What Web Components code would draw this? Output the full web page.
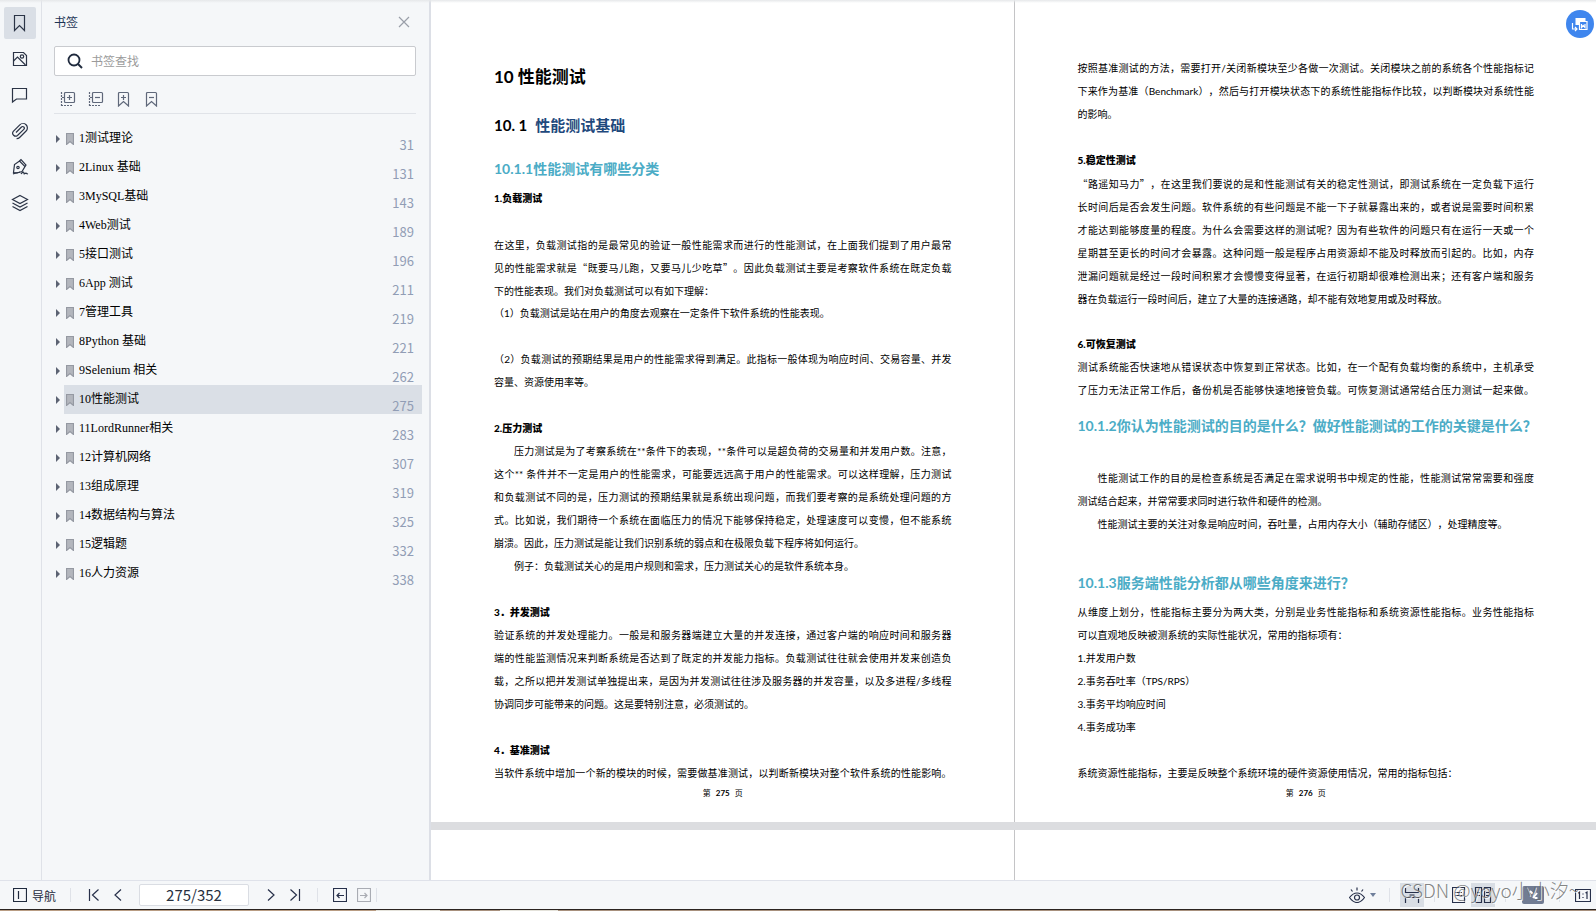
<!DOCTYPE html>
<html lang="zh-CN">
<head>
<meta charset="utf-8">
<title>性能测试</title>
<style>
  html, body {
    height: 100%;
    margin: 0;
  }

  body {
    font-family: "Noto Sans CJK SC", sans-serif;
    font-size: 12px;
    color: #1f2a3d;
    overflow: hidden;
  }
</style>
</head>
<body>
<pdf-reader>
  <side-rail slot="rail"></side-rail>
  <bookmark-panel slot="panel" heading="书签">
    <bookmark-item page="31">1测试理论</bookmark-item>
    <bookmark-item page="131">2Linux 基础</bookmark-item>
    <bookmark-item page="143">3MySQL基础</bookmark-item>
    <bookmark-item page="189">4Web测试</bookmark-item>
    <bookmark-item page="196">5接口测试</bookmark-item>
    <bookmark-item page="211">6App 测试</bookmark-item>
    <bookmark-item page="219">7管理工具</bookmark-item>
    <bookmark-item page="221">8Python 基础</bookmark-item>
    <bookmark-item page="262">9Selenium 相关</bookmark-item>
    <bookmark-item page="275" selected>10性能测试</bookmark-item>
    <bookmark-item page="283">11LordRunner相关</bookmark-item>
    <bookmark-item page="307">12计算机网络</bookmark-item>
    <bookmark-item page="319">13组成原理</bookmark-item>
    <bookmark-item page="325">14数据结构与算法</bookmark-item>
    <bookmark-item page="332">15逻辑题</bookmark-item>
    <bookmark-item page="338">16人力资源</bookmark-item>
  </bookmark-panel>

  <pdf-page number="275">
    <doc-heading level="1">10 性能测试</doc-heading>
    <doc-heading level="2" number="10. 1">性能测试基础</doc-heading>
    <doc-heading level="3">10.1.1性能测试有哪些分类</doc-heading>
    <doc-heading level="4">1.负载测试</doc-heading>
    <doc-blank></doc-blank>
    <doc-text quoted>
      在这里，负载测试指的是最常见的验证一般性能需求而进行的性能测试，在上面我们提到了用户最常
      见的性能需求就是“既要马儿跑，又要马儿少吃草”。因此负载测试主要是考察软件系统在既定负载
      下的性能表现。我们对负载测试可以有如下理解：
    </doc-text>
    <doc-text>（1）负载测试是站在用户的角度去观察在一定条件下软件系统的性能表现。</doc-text>
    <doc-blank></doc-blank>
    <doc-text>
      （2）负载测试的预期结果是用户的性能需求得到满足。此指标一般体现为响应时间、交易容量、并发
      容量、资源使用率等。
    </doc-text>
    <doc-blank></doc-blank>
    <doc-heading level="4">2.压力测试</doc-heading>
    <doc-text indent>
      压力测试是为了考察系统在**条件下的表现，**条件可以是超负荷的交易量和并发用户数。注意，
      这个** 条件并不一定是用户的性能需求，可能要远远高于用户的性能需求。可以这样理解，压力测试
      和负载测试不同的是，压力测试的预期结果就是系统出现问题，而我们要考察的是系统处理问题的方
      式。比如说，我们期待一个系统在面临压力的情况下能够保持稳定，处理速度可以变慢，但不能系统
      崩溃。因此，压力测试是能让我们识别系统的弱点和在极限负载下程序将如何运行。
    </doc-text>
    <doc-text indent>例子：负载测试关心的是用户规则和需求，压力测试关心的是软件系统本身。</doc-text>
    <doc-blank></doc-blank>
    <doc-heading level="4">3．并发测试</doc-heading>
    <doc-text>
      验证系统的并发处理能力。一般是和服务器端建立大量的并发连接，通过客户端的响应时间和服务器
      端的性能监测情况来判断系统是否达到了既定的并发能力指标。负载测试往往就会使用并发来创造负
      载，之所以把并发测试单独提出来，是因为并发测试往往涉及服务器的并发容量，以及多进程/多线程
      协调同步可能带来的问题。这是要特别注意，必须测试的。
    </doc-text>
    <doc-blank></doc-blank>
    <doc-heading level="4">4．基准测试</doc-heading>
    <doc-text full>当软件系统中增加一个新的模块的时候，需要做基准测试，以判断新模块对整个软件系统的性能影响。</doc-text>
  </pdf-page>

  <pdf-page number="276" side="right">
    <doc-text>
      按照基准测试的方法，需要打开/关闭新模块至少各做一次测试。关闭模块之前的系统各个性能指标记
      下来作为基准（Benchmark），然后与打开模块状态下的系统性能指标作比较，以判断模块对系统性能
      的影响。
    </doc-text>
    <doc-blank></doc-blank>
    <doc-heading level="4">5.稳定性测试</doc-heading>
    <doc-text quoted>
      “路遥知马力”，在这里我们要说的是和性能测试有关的稳定性测试，即测试系统在一定负载下运行
      长时间后是否会发生问题。软件系统的有些问题是不能一下子就暴露出来的，或者说是需要时间积累
      才能达到能够度量的程度。为什么会需要这样的测试呢？因为有些软件的问题只有在运行一天或一个
      星期甚至更长的时间才会暴露。这种问题一般是程序占用资源却不能及时释放而引起的。比如，内存
      泄漏问题就是经过一段时间积累才会慢慢变得显著，在运行初期却很难检测出来；还有客户端和服务
      器在负载运行一段时间后，建立了大量的连接通路，却不能有效地复用或及时释放。
    </doc-text>
    <doc-blank></doc-blank>
    <doc-heading level="4">6.可恢复测试</doc-heading>
    <doc-text full>
      测试系统能否快速地从错误状态中恢复到正常状态。比如，在一个配有负载均衡的系统中，主机承受
      了压力无法正常工作后，备份机是否能够快速地接管负载。可恢复测试通常结合压力测试一起来做。
    </doc-text>
    <doc-heading level="3">10.1.2你认为性能测试的目的是什么？做好性能测试的工作的关键是什么？</doc-heading>
    <doc-blank></doc-blank>
    <doc-text indent>
      性能测试工作的目的是检查系统是否满足在需求说明书中规定的性能，性能测试常常需要和强度
      测试结合起来，并常常要求同时进行软件和硬件的检测。
    </doc-text>
    <doc-text indent>性能测试主要的关注对象是响应时间，吞吐量，占用内存大小（辅助存储区），处理精度等。</doc-text>
    <doc-blank></doc-blank>
    <doc-heading level="3">10.1.3服务端性能分析都从哪些角度来进行？</doc-heading>
    <doc-text>
      从维度上划分，性能指标主要分为两大类，分别是业务性能指标和系统资源性能指标。业务性能指标
      可以直观地反映被测系统的实际性能状况，常用的指标项有：
    </doc-text>
    <doc-text>1.并发用户数</doc-text>
    <doc-text>2.事务吞吐率（TPS/RPS）</doc-text>
    <doc-text>3.事务平均响应时间</doc-text>
    <doc-text>4.事务成功率</doc-text>
    <doc-blank></doc-blank>
    <doc-text>系统资源性能指标，主要是反映整个系统环境的硬件资源使用情况，常用的指标包括：</doc-text>
  </pdf-page>

  <pdf-page></pdf-page>
  <pdf-page side="right"></pdf-page>

  <convert-button slot="float"></convert-button>
  <status-bar slot="status" position="275/352"></status-bar>
  <water-mark slot="mark">CSDN @yoyo小小汐~</water-mark>
</pdf-reader>

<script>
// [width, height, markup]
const ICONS = {
  bookmark: [18, 18, '<path d="M3.500 1.500h10v15l-5-5-5 5z"/>'],
  image: [18, 18, '<path d="M2.500 2.500h10l3 3v10h-13z"/><circle cx="11" cy="6.500" r="1.700"/><path d="M2.500 11l4-4 8 8"/>'],
  comment: [18, 18, '<path d="M1.500 2.500h14v10.500h-10l-4 3z"/>'],
  clip: [18, 18, '<path d="M5 10.500l5.500-5.500a1.600 1.600 0 0 1 2.300 2.300l-6.300 6.200a3 3 0 0 1-4.200-4.200l6.500-6.500a4.300 4.300 0 0 1 6.300 6.200l-6.500 6.500a4 4 0 0 1-3 1.200"/>'],
  pen: [18, 18, '<path d="M2.500 14.500l1-8 5-3.500 5.500 5.500-3 5-5 1.500z"/><path d="M8.500 3l1.500-1.500 5 5.500-1 1.500"/><circle cx="7" cy="9.500" r="1.200"/><path d="M2 16c2-1 4-1 7-2M10 16c2-3 3-2 3-.500s2-1.500 2.500 0l1.500.500"/>'],
  layers: [18, 18, '<path d="M9 1.500l7.500 4-7.500 4-7.500-4z"/><path d="M1.500 9l7.500 4 7.500-4M1.500 12.500l7.500 4 7.500-4"/>'],
  close: [12, 12, '<path d="M1 1l10 10M11 1l-10 10"/>'],
  search: [16, 16, '<circle cx="7" cy="7" r="5.500" stroke-width="1.800"/><path d="M11 11l4 4" stroke-width="2"/>'],
  expand: [16, 16, '<rect x="4.500" y="1.500" width="10" height="10" rx="1"/><path d="M7 6.500h5M9.500 4v5"/><path d="M1.500 1v14M1 14.500h11" stroke-dasharray="2 1"/><path d="M2 6.500h2"/>'],
  collapse: [16, 16, '<rect x="4.500" y="1.500" width="10" height="10" rx="1"/><path d="M7 6.500h5"/><path d="M1.500 1v14M1 14.500h11" stroke-dasharray="2 1"/><path d="M2 6.500h2"/>'],
  add: [16, 16, '<path d="M2.500 2.500q0-1 1-1h8q1 0 1 1v12.500l-5-4.500-5 4.500z"/><path d="M5 6.500h5M7.500 4v5"/>'],
  remove: [16, 16, '<path d="M2.500 2.500q0-1 1-1h8q1 0 1 1v12.500l-5-4.500-5 4.500z"/><path d="M5 6.500h5"/>'],
  arrow: [6, 10, '<path d="M1 1l4 4-4 4z" fill="currentColor" stroke="none"/>'],
  mark: [8, 12, '<path d="M.500.500h7v11l-3.500-3-3.500 3z" fill="#b3b6bd" stroke="#9599a2"/>'],
  nav: [14, 14, '<path d="M.500.500h13v13h-13zM5.500 3v8"/>'],
  first: [12, 14, '<path d="M1.500 1v12M10.500 1.500l-6 5.500 6 5.500"/>'],
  prev: [8, 14, '<path d="M7 1.500l-6 5.500 6 5.500"/>'],
  next: [8, 14, '<path d="M1 1.500l6 5.500-6 5.500"/>'],
  last: [12, 14, '<path d="M10.500 1v12M1.500 1.500l6 5.500-6 5.500"/>'],
  back: [14, 14, '<path d="M.500.500h13v13h-13zM4 7.500h7M6.500 5l-2.500 2.500 2.500 2.500"/>'],
  forward: [14, 14, '<path d="M.500.500h13v13h-13zM3 7.500h7M7.500 5l2.500 2.500-2.500 2.500"/>'],
  eye: [16, 16, '<path d="M.500 10.500q3.500-4.500 7.500-4.500t7.500 4.500q-3.500 5-7.500 5t-7.500-5z"/><circle cx="8" cy="10.500" r="2.500"/><path d="M8 .500v3M2 2.500l1.500 2M14 2.500l-1.500 2"/>'],
  caret: [6, 4, '<path d="M0 0h6l-3 4z" fill="currentColor" stroke="none"/>'],
  fit: [16, 16, '<path d="M1.500 1v4.500h13v-4.500M1.500 16v-5.500h13v5.500M5.500 8h5"/>'],
  single: [14, 16, '<path d="M.500.500h12v15h-12zM3 5.500h7M3 8.500h7"/>'],
  double: [18, 16, '<path d="M1.500.500h6v15h-6zM10.500.500h6v15h-6zM3 5.500h3M3 8.500h3M12 5.500h3M12 8.500h3"/>'],
  tool: [22, 18, '<rect width="22" height="18" rx="2" fill="#717c93" stroke="none"/><path d="M8 5l3 3M11 12l4-5M12.500 12h3" stroke="#fff" stroke-width="2"/>'],
  actual: [16, 14, '<path d="M.500 1.500h15v12h-15z"/><path d="M3 5l1.500-1v7M10.500 5l1.500-1v7M8 5.500v1M8 9v1"/>'],
  convert: [18, 18, '<path d="M4.500 3h10v3h-6.500v4h-3.500z" fill="#fff" stroke="none"/><path d="M8.500 6.500h7.500v8h-7.500z"/><path d="M10.500 9v3.500l1.700-2 1.800 2v-3.500M1.500 8v6h4M4 12l2 2-2 2"/>']
};

class UiIcon extends HTMLElement {
  constructor() {
    super();
    this.attachShadow({ mode: 'open' });
  }

  connectedCallback() {
    const [width, height, markup] = ICONS[this.getAttribute('name')];
    this.shadowRoot.innerHTML = `
        <style>
            :host {
                display: inline-flex;
                flex: none;
            }

            svg {
                fill: none;
                stroke: currentColor;
                stroke-width: 1.2;
            }
        </style>
        <svg width="${width}" height="${height}" viewBox="0 0 ${width} ${height}" aria-hidden="true">${markup}</svg>`;
  }
}

class PdfReader extends HTMLElement {
  constructor() {
    super();
    this.attachShadow({ mode: 'open' });
    this.shadowRoot.innerHTML = `
        <style>
            :host {
                display: flex;
                flex-direction: column;
                position: relative;
                height: 100vh;
                background: #f5f7f9;
            }

            .top-shadow {
                position: absolute;
                inset: 0 0 auto;
                height: 3px;
                background: linear-gradient(#e6e8ea, #e6e8ea00);
            }

            .workspace {
                display: flex;
                flex: 1;
                min-height: 0;
            }

            main {
                display: grid;
                grid-template-columns: 1fr 1fr;
                grid-template-rows: auto 1fr;
                row-gap: 8px;
                flex: 1;
                min-width: 0;
                overflow: hidden;
                background: #dcdde0;
            }
        </style>
        <div class="workspace">
          <slot name="rail"></slot>
          <slot name="panel"></slot>
          <main><slot></slot></main>
        </div>
        <slot name="status"></slot>
        <slot name="float"></slot>
        <slot name="mark"></slot>
        <div class="top-shadow"></div>`;
  }
}

class SideRail extends HTMLElement {
  constructor() {
    super();
    this.attachShadow({ mode: 'open' });
    this.shadowRoot.innerHTML = `
        <style>
            :host {
                display: block;
                flex: none;
                width: 41px;
                border-right: 1px solid #dfe2e8;
            }

            nav {
                display: flex;
                flex-direction: column;
                gap: 4px;
                padding: 7px 5px 0 4px;
            }

            button {
                display: flex;
                align-items: center;
                justify-content: center;
                width: 32px;
                height: 32px;
                padding: 0;
                border: 0;
                border-radius: 2px;
                background: none;
                color: #2b3446;
            }

            .active {
                background: #dadfe6;
            }
        </style>
        <nav>
          <button class="active" aria-label="书签"><ui-icon name="bookmark"></ui-icon></button>
          <button aria-label="缩略图"><ui-icon name="image"></ui-icon></button>
          <button aria-label="批注"><ui-icon name="comment"></ui-icon></button>
          <button aria-label="附件"><ui-icon name="clip"></ui-icon></button>
          <button aria-label="签名"><ui-icon name="pen"></ui-icon></button>
          <button aria-label="图层"><ui-icon name="layers"></ui-icon></button>
        </nav>`;
  }
}

class BookmarkPanel extends HTMLElement {
  constructor() {
    super();
    this.attachShadow({ mode: 'open' });
    this.shadowRoot.innerHTML = `
        <style>
            :host {
                display: block;
                flex: none;
                box-sizing: border-box;
                width: 389px;
                padding-top: 12px;
                border-right: 2px solid #dcdfe6;
            }

            header, .search, .tools {
                display: flex;
                align-items: center;
                margin: 0 13px 0 12px;
            }

            header {
                justify-content: space-between;
                height: 20px;
                padding-right: 6px;
            }

            h2 {
                margin: 0;
                padding-bottom: 2px;
                font-size: 12px;
                font-weight: 400;
                color: #1d3556;
            }

            button {
                display: flex;
                padding: 0;
                border: 0;
                background: none;
                color: #5f687a;
            }

            header button {
                color: #9a9fa9;
            }

            .search {
                box-sizing: border-box;
                height: 30px;
                margin-top: 14px;
                padding: 0 12px;
                gap: 8px;
                border: 1px solid #c9cbcf;
                border-radius: 2px;
                background: #fff;
            }

            input {
                flex: 1;
                min-width: 0;
                padding: 0 0 2px;
                border: 0;
                outline: 0;
                background: none;
                font: inherit;
            }

            input::placeholder {
                color: #9b9b9b;
            }

            .tools {
                height: 29px;
                gap: 12px;
                padding: 8px 6px 0;
                border-bottom: 1px solid #e0e3e8;
            }

            .list {
                padding: 10px 7px 0 12px;
            }
        </style>
        <header>
          <h2></h2>
          <button aria-label="关闭"><ui-icon name="close"></ui-icon></button>
        </header>
        <label class="search">
          <ui-icon name="search"></ui-icon>
          <input type="text" placeholder="书签查找" aria-label="书签查找">
        </label>
        <div class="tools">
          <button aria-label="展开"><ui-icon name="expand"></ui-icon></button>
          <button aria-label="折叠"><ui-icon name="collapse"></ui-icon></button>
          <button aria-label="添加书签"><ui-icon name="add"></ui-icon></button>
          <button aria-label="删除书签"><ui-icon name="remove"></ui-icon></button>
        </div>
        <div class="list"><slot></slot></div>`;
  }

  connectedCallback() {
    this.shadowRoot.querySelector('h2').textContent = this.getAttribute('heading');
  }
}

class BookmarkItem extends HTMLElement {
  constructor() {
    super();
    this.attachShadow({ mode: 'open' });
    this.shadowRoot.innerHTML = `
        <style>
            :host {
                display: flex;
                align-items: center;
                height: 29px;
                color: #000;
            }

            button {
                display: flex;
                width: 10px;
                padding: 0 0 0 1px;
                border: 0;
                background: none;
                color: #5c6373;
            }

            a {
                display: flex;
                align-items: center;
                flex: 1;
                height: 100%;
                gap: 5px;
                padding: 0 8px 0 2px;
                color: inherit;
                text-decoration: none;
                font: 12px "Liberation Serif", "Noto Sans CJK SC", serif;
            }

            :host([selected]) a {
                background: #dadfe6;
            }

            .label {
                padding-bottom: 3px;
            }

            .page {
                align-self: flex-end;
                margin-left: auto;
                font: 13px/16px "Noto Sans CJK SC", sans-serif;
                color: #919db5;
            }
        </style>
        <button aria-label="展开"><ui-icon name="arrow"></ui-icon></button>
        <a href="#">
          <ui-icon name="mark"></ui-icon>
          <span class="label"><slot></slot></span>
          <span class="page"></span>
        </a>`;
  }

  connectedCallback() {
    this.shadowRoot.querySelector('.page').textContent = this.getAttribute('page');
  }
}

class PdfPage extends HTMLElement {
  constructor() {
    super();
    this.attachShadow({ mode: 'open' });
  }

  connectedCallback() {
    const number = this.getAttribute('number');
    this.shadowRoot.innerHTML = `
        <style>
            :host {
                display: flex;
                flex-direction: column;
                min-width: 0;
                padding: 57px 62px 21px 63px;
                background: #fff;
                color: #000;
            }

            :host([side="right"]) {
                border-left: 1px solid #c4c4c6;
            }

            :host(:not([number])) {
                padding: 0;
            }

            footer {
                margin-top: auto;
                font: 8px/16px Lato, "Noto Sans CJK SC", sans-serif;
                text-align: center;
                word-break: keep-all;
            }

            footer b {
                margin: 0 3px;
            }
        </style>
        <article><slot></slot></article>
        ${number ? `<footer>第 <b>${number}</b> 页</footer>` : ''}`;
  }
}

class DocHeading extends HTMLElement {
  constructor() {
    super();
    this.attachShadow({ mode: 'open' });
  }

  connectedCallback() {
    const level = this.getAttribute('level');
    const number = this.getAttribute('number');
    this.shadowRoot.innerHTML = `
        <style>
            :host {
                display: block;
            }

            h1, h2, h3, h4 {
                margin: 0;
                font-family: Lato, "Noto Sans CJK SC", sans-serif;
                font-weight: 700;
                line-height: 23px;
                white-space: nowrap;
            }

            h1 {
                padding: 8px 0 26px;
                font-size: 17px;
                color: #000;
            }

            h2 {
                padding-bottom: 8px;
                font-size: 15px;
                color: #1f497d;
            }

            h2 span {
                margin-right: 8px;
                color: #000;
            }

            h3 {
                padding: 12px 0 7px;
                font-size: 14px;
                color: #4bacc6;
            }

            h4 {
                font-size: 10px;
                font-weight: 900;
                color: #000;
            }
        </style>
        <h${level}>${number ? `<span>${number}</span>` : ''}<slot></slot></h${level}>`;
  }
}

/**
 * Paragraph with fixed line breaks. Every line but the last is justified;
 * "full" justifies the last one too.
 */
class DocText extends HTMLElement {
  constructor() {
    super();
    this.attachShadow({ mode: 'open' });
  }

  connectedCallback() {
    this.shadowRoot.innerHTML = `
        <style>
            :host {
                display: block;
                font: 10px/23px Lato, "Noto Sans CJK SC", sans-serif;
                text-spacing-trim: space-all;
            }

            :host([quoted]) {
                font-family: "Noto Sans CJK SC", sans-serif;
            }

            p {
                margin: 0;
            }

            span {
                display: block;
                white-space: nowrap;
                text-align-last: justify;
            }

            span:last-child {
                text-align-last: left;
            }

            :host([full]) span:last-child {
                text-align-last: justify;
            }

            :host([indent]) span:first-child {
                padding-left: 20px;
            }
        </style>
        <p></p>`;
    const p = this.shadowRoot.querySelector('p');
    this.textContent.trim().split('\n').forEach((text) => {
      const line = document.createElement('span');
      line.textContent = text.trim();
      p.appendChild(line);
    });
  }
}

class DocBlank extends HTMLElement {
  constructor() {
    super();
    this.attachShadow({ mode: 'open' });
    this.shadowRoot.innerHTML = '<style>:host { display: block; height: 23px; }</style>';
  }
}

class ConvertButton extends HTMLElement {
  constructor() {
    super();
    this.attachShadow({ mode: 'open' });
    this.shadowRoot.innerHTML = `
        <style>
            :host {
                position: absolute;
                top: 10px;
                right: 2px;
            }

            button {
                display: flex;
                align-items: center;
                justify-content: center;
                width: 28px;
                height: 28px;
                padding: 0;
                border: 0;
                border-radius: 50%;
                background: #3f86ee;
                color: #fff;
            }
        </style>
        <button aria-label="转换"><ui-icon name="convert"></ui-icon></button>`;
  }
}

class StatusBar extends HTMLElement {
  constructor() {
    super();
    this.attachShadow({ mode: 'open' });
    this.shadowRoot.innerHTML = `
        <style>
            :host {
                display: block;
                flex: none;
                border-top: 1px solid #dfe2ea;
                background: #f5f7f9;
            }

            .bar {
                display: flex;
                align-items: center;
                justify-content: space-between;
                height: 28px;
                padding: 0 5px 0 13px;
            }

            .group {
                display: flex;
                align-items: center;
            }

            button {
                display: flex;
                align-items: center;
                justify-content: center;
                box-sizing: border-box;
                height: 24px;
                padding: 0;
                border: 0;
                background: none;
                font: inherit;
                color: #27304a;
            }

            button:disabled {
                color: #a9acb3;
            }

            .label {
                gap: 5px;
                color: #1f2a3d;
            }

            .pressed {
                background: #d9dee5;
            }

            .square {
                width: 24px;
            }

            .view {
                gap: 5px;
            }

            .view ui-icon:last-child {
                color: #6f7f9b;
            }

            i {
                width: 1px;
                height: 14px;
                background: #dfe2e8;
            }

            input {
                box-sizing: border-box;
                width: 110px;
                height: 22px;
                margin: 0 10px 0 9px;
                padding: 0 0 1px;
                border: 1px solid #dadde3;
                border-radius: 2px;
                background: #fff;
                text-align: center;
                font: 15px "Noto Sans CJK SC", sans-serif;
                color: #27303f;
            }

            /* strip of the desktop that shows under the window */
            .edge {
                height: 1px;
                border-top: 1px solid #2a2320;
                background: linear-gradient(90deg, #b99d84 0 376px, #e4e2da 376px 440px, #a8917e 440px 500px, #e4e2da 500px 558px, #a8917e 558px);
            }
        </style>
        <div class="bar">
          <div class="group">
            <button class="label"><ui-icon name="nav"></ui-icon>导航</button>
            <i style="margin: 0 11px 0 14px"></i>
            <button class="square" aria-label="首页"><ui-icon name="first"></ui-icon></button>
            <button class="square" aria-label="上一页"><ui-icon name="prev"></ui-icon></button>
            <input type="text" aria-label="页码">
            <button class="square" aria-label="下一页"><ui-icon name="next"></ui-icon></button>
            <button class="square" aria-label="末页"><ui-icon name="last"></ui-icon></button>
            <i style="margin: 0 10px"></i>
            <button class="square" aria-label="后退"><ui-icon name="back"></ui-icon></button>
            <button class="square" aria-label="前进" disabled><ui-icon name="forward"></ui-icon></button>
            <i></i>
          </div>
          <div class="group">
            <button class="view" aria-label="护眼"><ui-icon name="eye"></ui-icon><ui-icon name="caret"></ui-icon></button>
            <i style="margin: 0 10px 0 13px"></i>
            <button class="square pressed" aria-label="适合页面"><ui-icon name="fit"></ui-icon></button>
            <i style="margin: 0 12px 0 10px"></i>
            <button class="square" aria-label="单页"><ui-icon name="single"></ui-icon></button>
            <button class="square pressed" aria-label="双页"><ui-icon name="double"></ui-icon></button>
            <i style="margin: 0 16px 0 10px"></i>
            <button aria-label="工具"><ui-icon name="tool"></ui-icon></button>
            <i style="margin: 0 15px"></i>
            <button aria-label="实际大小"><ui-icon name="actual"></ui-icon></button>
          </div>
        </div>
        <div class="edge"></div>`;
  }

  connectedCallback() {
    this.shadowRoot.querySelector('input').value = this.getAttribute('position');
  }
}

class WaterMark extends HTMLElement {
  constructor() {
    super();
    this.attachShadow({ mode: 'open' });
    this.shadowRoot.innerHTML = `
        <style>
            :host {
                position: absolute;
                right: 17px;
                bottom: 8px;
                font-size: 19px;
                font-weight: 300;
                line-height: 26px;
                color: #666c;
                text-shadow: 1px 1px 0 #fffc;
                white-space: nowrap;
                pointer-events: none;
            }
        </style>
        <slot></slot>`;
  }
}

customElements.define('ui-icon', UiIcon);
customElements.define('pdf-reader', PdfReader);
customElements.define('side-rail', SideRail);
customElements.define('bookmark-panel', BookmarkPanel);
customElements.define('bookmark-item', BookmarkItem);
customElements.define('pdf-page', PdfPage);
customElements.define('doc-heading', DocHeading);
customElements.define('doc-text', DocText);
customElements.define('doc-blank', DocBlank);
customElements.define('convert-button', ConvertButton);
customElements.define('status-bar', StatusBar);
customElements.define('water-mark', WaterMark);
</script>
</body>
</html>
